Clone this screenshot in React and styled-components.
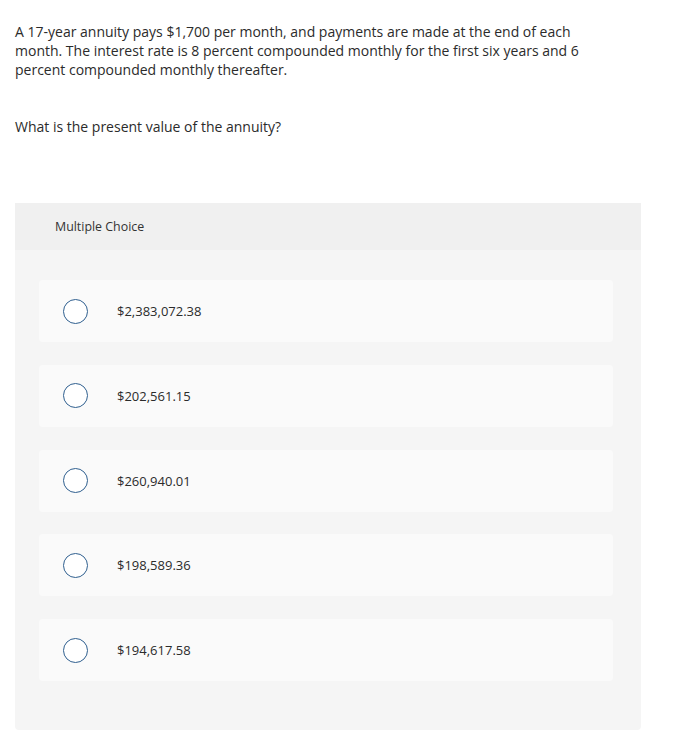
import styled, { createGlobalStyle } from "styled-components";

const GlobalStyle = createGlobalStyle`
    body {
        margin: 0;
        background: #ffffff;
        font-family: "Open Sans", "Liberation Sans", sans-serif;
        color: #333333;
    }
`;

const Page = styled.div`
    padding: 22px 15px 15px 15px;
    width: 626px;
`;

const Prompt = styled.p`
    margin: 0;
    max-width: 578px;
    font-size: 14px;
    line-height: 19px;
    color: #2b2b2b;
`;

const Question = styled(Prompt)`
    margin-top: 38px;
`;

const Panel = styled.div`
    margin-top: 67px;
    background: #f5f5f5;
    border-radius: 0 0 4px 4px;
    padding-bottom: 49px;
`;

const PanelHeader = styled.div`
    height: 47px;
    background: #f0f0f0;
    display: flex;
    align-items: center;
    padding-left: 40px;
    font-size: 12.4px;
    color: #333333;
`;

const Options = styled.div`
    display: flex;
    flex-direction: column;
    gap: 22.75px;
    padding: 30px 28px 0 24px;
`;

const Option = styled.label`
    display: flex;
    align-items: center;
    height: 62px;
    background: #fafafa;
    border-radius: 4px;
    padding-left: 24px;
    cursor: pointer;
`;

const Radio = styled.span`
    width: 23px;
    height: 23px;
    border: 1.5px solid #2f5f8f;
    border-radius: 50%;
    background: #ffffff;
    flex-shrink: 0;
`;

const Answer = styled.span`
    margin-left: 29px;
    font-size: 13px;
    color: #2b2b2b;
`;

const answers = [
    "$2,383,072.38",
    "$202,561.15",
    "$260,940.01",
    "$198,589.36",
    "$194,617.58",
];

const App = () => {
    return (
        <Page>
            <GlobalStyle />
            <Prompt>
                A 17-year annuity pays $1,700 per month, and payments are made at
                the end of each month. The interest rate is 8 percent compounded
                monthly for the first six years and 6 percent compounded monthly
                thereafter.
            </Prompt>
            <Question>What is the present value of the annuity?</Question>
            <Panel>
                <PanelHeader>Multiple Choice</PanelHeader>
                <Options>
                    {answers.map((answer) => (
                        <Option key={answer}>
                            <Radio />
                            <Answer>{answer}</Answer>
                        </Option>
                    ))}
                </Options>
            </Panel>
        </Page>
    );
};

export default App;
